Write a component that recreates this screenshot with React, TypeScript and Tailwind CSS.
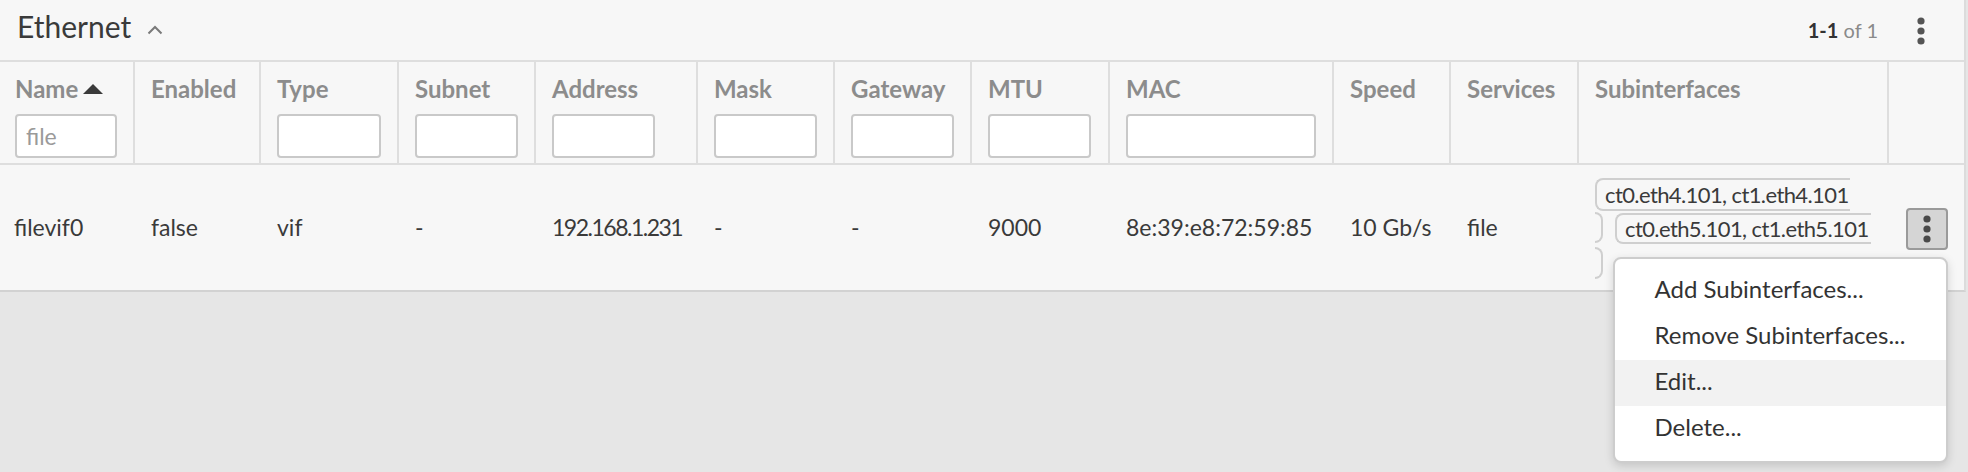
import React from "react";

const cols =
  "grid grid-cols-[135px_126px_138px_137px_162px_137px_137px_138px_224px_117px_128px_310px_1fr]";

function Kebab({ className = "" }: { className?: string }) {
  return (
    <svg width="8" height="28" viewBox="0 0 8 28" className={className}>
      <circle cx="4" cy="4" r="3.6" fill="currentColor" />
      <circle cx="4" cy="14" r="3.6" fill="currentColor" />
      <circle cx="4" cy="24" r="3.6" fill="currentColor" />
    </svg>
  );
}

type H = { label: string; input?: number; sort?: boolean; value?: string };

const headers: H[] = [
  { label: "Name", input: 102, sort: true, value: "file" },
  { label: "Enabled" },
  { label: "Type", input: 104 },
  { label: "Subnet", input: 103 },
  { label: "Address", input: 103 },
  { label: "Mask", input: 103 },
  { label: "Gateway", input: 103 },
  { label: "MTU", input: 103 },
  { label: "MAC", input: 190 },
  { label: "Speed" },
  { label: "Services" },
  { label: "Subinterfaces" },
];

const row = [
  "filevif0",
  "false",
  "vif",
  "-",
  "192.168.1.231",
  "-",
  "-",
  "9000",
  "8e:39:e8:72:59:85",
  "10 Gb/s",
  "file",
];

export default function App() {
  return (
    <div className="w-[1968px] h-[472px] bg-[#e6e6e6] font-['Lato',sans-serif] overflow-hidden">
      <div className="w-[1966px] bg-[#f7f7f7] border-r-2 border-b-2 border-r-[#dcdcdc] border-b-[#d2d2d2]">
        {/* Title bar */}
        <div className="h-[60px] flex items-center justify-between pl-[17px] pr-[23px]">
          <div className="flex items-center">
            <span className="text-[30px] leading-[29px] text-[#3a3a3a] relative -top-[4px]">
              Ethernet
            </span>
            <svg
              width="16"
              height="10"
              viewBox="0 0 16 10"
              className="ml-[16px] text-[#7a7a7a]"
            >
              <path
                d="M1.5 8.5 L8 2 L14.5 8.5"
                fill="none"
                stroke="currentColor"
                strokeWidth="2"
              />
            </svg>
          </div>
          <div className="flex items-center">
            <span className="text-[20px] text-[#333]">
              <span className="font-bold">1-1</span>
              <span className="text-[#8a8a8a]"> of 1</span>
            </span>
            <div className="w-[40px] ml-[23px] flex justify-center text-[#555] mt-[2px]">
              <Kebab />
            </div>
          </div>
        </div>

        {/* Header row */}
        <div className={`${cols} h-[105px] border-t-2 border-b-2 border-[#dedede]`}>
          {headers.map((h, i) => (
            <div
              key={h.label}
              className={`border-r-2 border-[#dedede] pt-[15px] ${i === 0 ? "pl-[15px]" : "pl-[16px]"}`}
            >
              <div className="flex items-center h-[24px]">
                <span className="text-[24px] leading-[24px] font-bold text-[#8c8c8c]">
                  {h.label}
                </span>
                {h.sort && (
                  <svg width="20" height="10" viewBox="0 0 20 10" className="ml-[5px] text-[#3a3a3a]">
                    <path d="M0 10 L10 0 L20 10 Z" fill="currentColor" />
                  </svg>
                )}
              </div>
              {h.input && (
                <input
                  readOnly
                  value={h.value ?? ""}
                  style={{ width: h.input }}
                  className="mt-[13px] h-[44px] bg-white border-2 border-[#c9c9c9] rounded-[4px] pl-[9px] text-[23px] text-[#9a9a9a] font-['Lato',sans-serif] outline-none"
                />
              )}
            </div>
          ))}
          <div />
        </div>

        {/* Data row */}
        <div className={`${cols} h-[125px]`}>
          {row.map((v, i) => (
            <div
              key={i}
              className={`flex items-center text-[23px] text-[#3a3a3a] whitespace-nowrap ${
                i === 0 ? "pl-[14px]" : "pl-[16px]"
              } ${i === 4 ? "tracking-[-1.5px]" : ""}`}
            >
              {v}
            </div>
          ))}
          {/* Subinterfaces */}
          <div className="pl-[16px] pt-[13px] text-[22px] text-[#3a3a3a] tracking-[-0.6px]">
            <div className="w-[255px] h-[33px] border-2 border-r-0 border-[#cfcfcf] rounded-l-[8px] pl-[8px] overflow-hidden whitespace-nowrap leading-[29px]">
              ct0.eth4.101, ct1.eth4.101
            </div>
            <div className="flex items-start mt-[1px]">
              <div className="w-[8px] h-[31px] border-2 border-l-0 border-[#cfcfcf] rounded-r-[8px]" />
              <div className="ml-[12px] mt-[1px] w-[256px] h-[31px] border-2 border-r-0 border-[#cfcfcf] rounded-l-[8px] pl-[8px] overflow-hidden whitespace-nowrap leading-[27px]">
                ct0.eth5.101, ct1.eth5.101
              </div>
            </div>
            <div className="mt-[3px] w-[8px] h-[32px] border-2 border-l-0 border-[#cfcfcf] rounded-r-[8px]" />
          </div>
          {/* Actions */}
          <div className="flex items-center justify-center">
            <div className="relative mt-[2px]">
              <div className="w-[42px] h-[42px] bg-[#d5d5d5] border-2 border-[#9a9a9a] rounded-[4px] flex items-center justify-center text-[#4a4a4a]">
                <Kebab />
              </div>
              <div className="absolute right-0 top-[49px] w-[335px] bg-white border-2 border-[#cdcdcd] rounded-[8px] py-[9px] shadow-[0_3px_10px_rgba(0,0,0,0.15)] z-10">
                {["Add Subinterfaces...", "Remove Subinterfaces...", "Edit...", "Delete..."].map(
                  (m) => (
                    <div
                      key={m}
                      className={`h-[46px] pl-[40px] pb-[4px] text-[24px] leading-[42px] text-[#333] whitespace-nowrap ${
                        m === "Edit..." ? "bg-[#f2f2f2]" : ""
                      }`}
                    >
                      {m}
                    </div>
                  )
                )}
              </div>
            </div>
          </div>
        </div>
      </div>
    </div>
  );
}
